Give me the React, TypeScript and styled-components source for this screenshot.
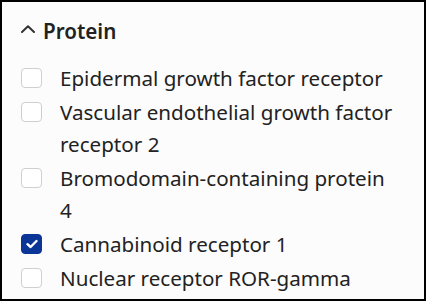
import React, { useState } from "react";
import styled, { createGlobalStyle } from "styled-components";

const GlobalStyle = createGlobalStyle`
  html, body {
    margin: 0;
    padding: 0;
    background: #fcfcfc;
  }
  * {
    box-sizing: border-box;
  }
`;

const proteins = [
  { id: "egfr", label: "Epidermal growth factor receptor", checked: false },
  { id: "vegfr2", label: "Vascular endothelial growth factor receptor 2", checked: false },
  { id: "brd4", label: "Bromodomain-containing protein 4", checked: false },
  { id: "cb1", label: "Cannabinoid receptor 1", checked: true },
  { id: "rorc", label: "Nuclear receptor ROR-gamma", checked: false },
];

const App = () => {
  const [open, setOpen] = useState<boolean>(true);
  const [selected, setSelected] = useState<string[]>(
    proteins.filter((p) => p.checked).map((p) => p.id)
  );

  const toggle = (id: string) => {
    setSelected((prev) =>
      prev.includes(id) ? prev.filter((x) => x !== id) : [...prev, id]
    );
  };

  return (
    <>
      <GlobalStyle />
      <Panel>
        <Header onClick={() => setOpen(!open)}>
          <Chevron viewBox="0 0 14 8" isOpen={open}>
            <path d="M1 7 L7 1.3 L13 7" />
          </Chevron>
          <Title>Protein</Title>
        </Header>
        {open && (
          <List>
            {proteins.map((p) => {
              const isChecked = selected.includes(p.id);
              return (
                <Item key={p.id} onClick={() => toggle(p.id)}>
                  <Box isChecked={isChecked}>
                    {isChecked && (
                      <svg width="12" height="10" viewBox="0 0 12 10">
                        <path
                          d="M1.5 5.2 L4.6 8 L10.5 2"
                          fill="none"
                          stroke="#fff"
                          strokeWidth="2.4"
                          strokeLinecap="round"
                          strokeLinejoin="round"
                        />
                      </svg>
                    )}
                  </Box>
                  <Label>{p.label}</Label>
                </Item>
              );
            })}
          </List>
        )}
      </Panel>
    </>
  );
};

interface ChevronProps {
  isOpen: boolean;
}

interface BoxProps {
  isChecked: boolean;
}

const Panel = styled.div`
  width: 426px;
  height: 301px;
  border: 2px solid #000;
  background: #fcfcfc;
  padding: 15px 26px 0 19px;
  font-family: "Noto Sans", "Open Sans", sans-serif;
  color: #222;
  overflow: hidden;
`;

const Header = styled.div`
  display: flex;
  align-items: center;
  gap: 8px;
  height: 28px;
  cursor: pointer;
`;

const Chevron = styled.svg<ChevronProps>`
  width: 14px;
  height: 8px;
  margin-top: -4px;
  fill: none;
  stroke: #333;
  stroke-width: 2;
  stroke-linecap: round;
  stroke-linejoin: round;
  transform: ${(props) => (props.isOpen ? "none" : "rotate(180deg)")};
`;

const Title = styled.span`
  font-size: 20.6px;
  font-weight: 600;
  line-height: 28px;
`;

const List = styled.div`
  display: flex;
  flex-direction: column;
  gap: 2px;
  margin-top: 17px;
`;

const Item = styled.label`
  display: flex;
  align-items: flex-start;
  gap: 18px;
  cursor: pointer;
`;

const Box = styled.span<BoxProps>`
  flex: none;
  display: flex;
  align-items: center;
  justify-content: center;
  width: 21px;
  height: 20px;
  margin-top: 6px;
  border-radius: 4px;
  border: 1px solid ${(props) => (props.isChecked ? "#0a3597" : "#cfcfcf")};
  background: ${(props) => (props.isChecked ? "#0a3597" : "#fff")};
`;

const Label = styled.span`
  font-size: 20.6px;
  line-height: 32px;
`;

export default App;
